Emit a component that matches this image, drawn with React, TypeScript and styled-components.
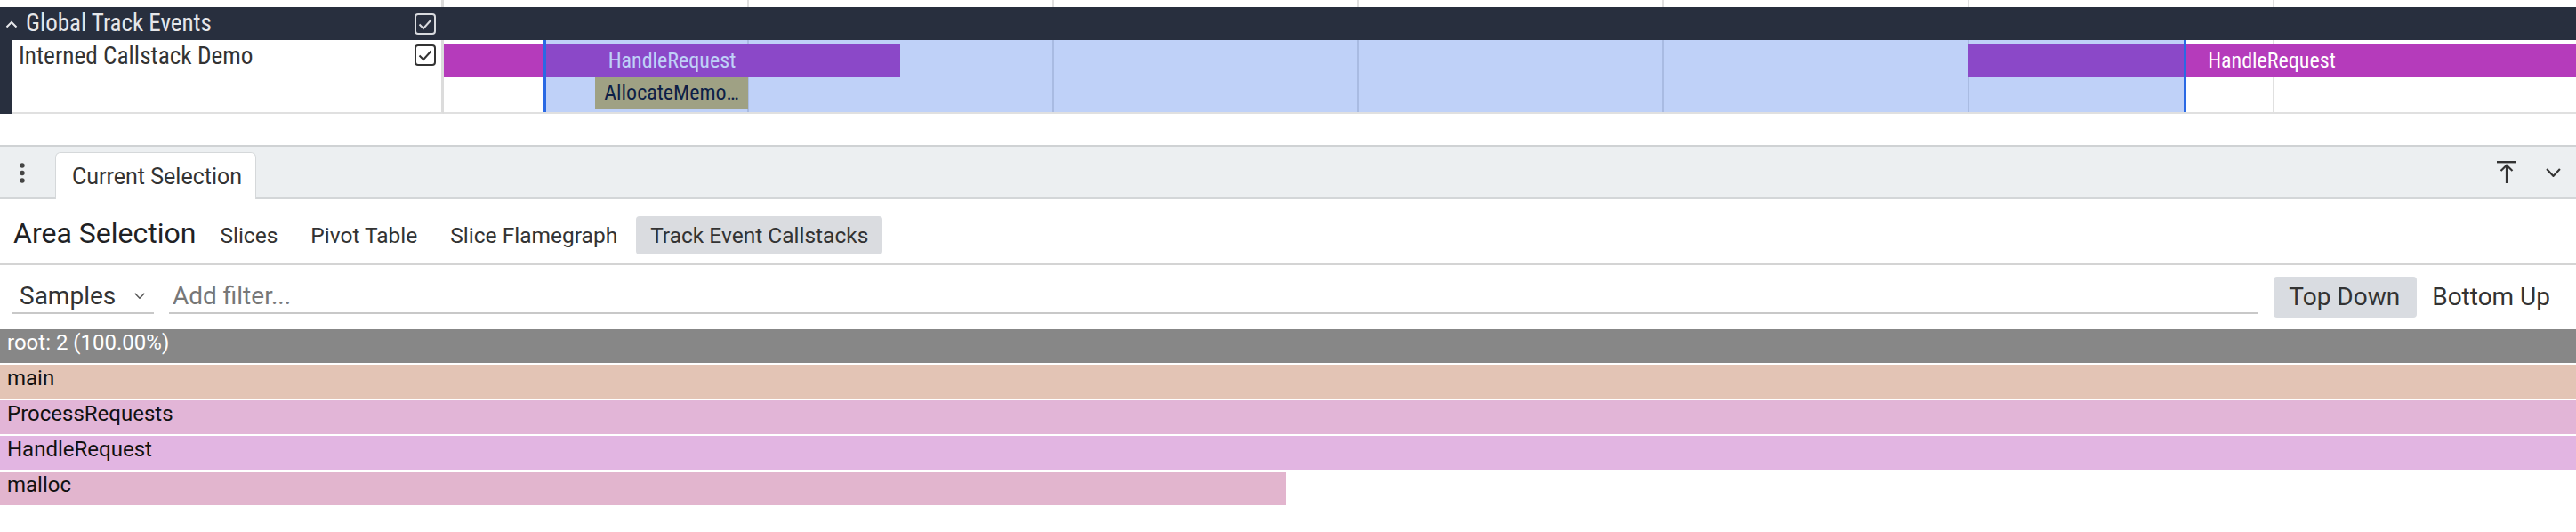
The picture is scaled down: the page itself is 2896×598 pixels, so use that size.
import React from "react";
import styled, { createGlobalStyle } from "styled-components";

const CONDENSED = `"Roboto Condensed", "Liberation Sans Narrow", Roboto, sans-serif`;

const GlobalStyle = createGlobalStyle`
  html, body { margin: 0; padding: 0; background: #ffffff; }
  body { font-family: Roboto, "Liberation Sans", sans-serif; overflow: hidden; }
  #root { width: 2896px; height: 598px; }
  * { box-sizing: border-box; }
`;

const Page = styled.div`
  width: 2896px;
  height: 598px;
  display: flex;
  flex-direction: column;
  background: #ffffff;
  overflow: hidden;
`;

/* ---------- timeline ---------- */
const Timeline = styled.div`
  display: flex;
  flex-direction: column;
`;

const TrackLine = styled.div<{ $h: number }>`
  display: flex;
  height: ${(p) => p.$h}px;
  flex: none;
`;

const BlankShell = styled.div`
  width: 499px;
  flex: none;
  border-right: 3px solid #dcdcdc;
  background: #ffffff;
`;

const Canvas = styled.div`
  flex: 1;
  position: relative;
  overflow: hidden;
`;

const TrackCanvas = styled(Canvas)`
  border-bottom: 2px solid #e0e0e0;
`;

const GridLine = styled.div<{ $x: number }>`
  position: absolute;
  top: 0;
  bottom: 0;
  left: ${(p) => p.$x}px;
  width: 2px;
  background: #e0e0e0;
`;

const GroupHeader = styled.div`
  height: 37px;
  flex: none;
  background: #282f3e;
  display: flex;
  align-items: center;
`;

const GroupShell = styled.div`
  width: 499px;
  height: 100%;
  display: flex;
  align-items: center;
  padding: 0 9px 0 6px;
`;

const GroupTitle = styled.span`
  margin-left: 9px;
  font-family: ${CONDENSED};
  font-size: 27px;
  font-weight: 400;
  line-height: 37px;
  color: #e6e7ea;
  white-space: nowrap;
`;

const Spacer = styled.span`
  flex: 1;
`;

const Indent = styled.div`
  width: 14px;
  flex: none;
  background: #282f3e;
`;

const TrackShell = styled.div`
  width: 485px;
  flex: none;
  display: flex;
  align-items: flex-start;
  padding: 3px 6px 0 7px;
  background: #ffffff;
  border-right: 3px solid #dcdcdc;
  border-bottom: 2px solid #e0e0e0;
`;

const TrackTitle = styled.span`
  font-family: ${CONDENSED};
  font-size: 27.3px;
  line-height: 30px;
  color: #333333;
  white-space: nowrap;
`;

const CheckWrap = styled.span<{ $top: number }>`
  display: flex;
  margin-top: ${(p) => p.$top}px;
`;

const Slice = styled.div<{ $x: number; $w: number; $y: number; $bg: string; $fg: string }>`
  position: absolute;
  left: ${(p) => p.$x}px;
  width: ${(p) => p.$w}px;
  top: ${(p) => p.$y}px;
  height: 36px;
  background: ${(p) => p.$bg};
  color: ${(p) => p.$fg};
  font-family: ${CONDENSED};
  font-size: 24px;
  line-height: 36px;
  text-align: center;
  white-space: nowrap;
  overflow: hidden;
  padding: 0 4px;
`;

const SelectionOverlay = styled.div<{ $x: number; $w: number }>`
  position: absolute;
  left: ${(p) => p.$x}px;
  width: ${(p) => p.$w}px;
  top: 0;
  bottom: -2px;
  background: rgba(44, 104, 232, 0.3);
  border-left: 3px solid #2a69e4;
  border-right: 3px solid #2a69e4;
`;

const Gap = styled.div`
  height: 35px;
  flex: none;
`;

/* ---------- details panel ---------- */
const TabBar = styled.div`
  height: 61px;
  flex: none;
  display: flex;
  align-items: flex-end;
  background: #eceff1;
  border-top: 2px solid #cfd2d4;
  border-bottom: 2px solid #d3d6d8;
`;

const KebabButton = styled.div`
  width: 50px;
  align-self: center;
  display: flex;
  justify-content: center;
  padding-top: 3px;
`;

const Tab = styled.div`
  margin-left: 12px;
  margin-bottom: -2px;
  width: 226px;
  height: 53px;
  padding: 12px 20px 0 18px;
  background: #ffffff;
  border: 1px solid #d5d8da;
  border-bottom: none;
  border-radius: 6px 6px 0 0;
  font-size: 25px;
  line-height: 30px;
  color: #333333;
  white-space: nowrap;
  text-align: center;
`;

const TabBarSpacer = styled.div`
  flex: 1;
`;

const IconButton = styled.div<{ $w: number; $ml?: number }>`
  width: ${(p) => p.$w}px;
  margin-left: ${(p) => p.$ml ?? 0}px;
  align-self: center;
  display: flex;
  justify-content: center;
  align-items: center;
`;

const AreaHeader = styled.div`
  height: 74px;
  flex: none;
  display: flex;
  align-items: center;
  padding-left: 15px;
  border-bottom: 2px solid #d4d4d4;
`;

const AreaTitle = styled.span`
  font-size: 32px;
  color: #202124;
  margin: 3px 11px 0 0;
  white-space: nowrap;
`;

const ModeTab = styled.span<{ $active?: boolean }>`
  height: 43px;
  line-height: 43px;
  padding: 0 16px;
  margin: 9px 5px 0 0;
  border-radius: 4px;
  font-size: 24.5px;
  color: #333333;
  white-space: nowrap;
  background: ${(p) => (p.$active ? "#dadce0" : "transparent")};
`;

const Toolbar = styled.div`
  height: 72px;
  flex: none;
  display: flex;
  align-items: flex-start;
  padding: 13px 10px 0 14px;
`;

const SelectBox = styled.div`
  width: 159px;
  height: 42px;
  display: flex;
  align-items: center;
  padding: 2px 0 0 8px;
  border-bottom: 2px solid #c8c8c8;
  font-size: 28px;
  color: #333333;
`;

const SelectLabel = styled.span`
  flex: 1;
`;

const SelectChevron = styled.span`
  display: flex;
  margin-right: 10px;
`;

const FilterInput = styled.input`
  flex: 1;
  height: 42px;
  margin: 0 0 0 17px;
  padding: 2px 0 0 4px;
  border: none;
  border-bottom: 2px solid #c8c8c8;
  border-radius: 0;
  outline: none;
  background: transparent;
  font-family: Roboto, sans-serif;
  font-size: 28px;
  color: #333333;
  &::placeholder {
    color: #777777;
  }
`;

const ToggleGroup = styled.div`
  display: flex;
  margin-left: 17px;
`;

const ToggleButton = styled.span<{ $active?: boolean }>`
  height: 46px;
  line-height: 46px;
  padding: 0 19px 0 17px;
  border-radius: 4px;
  font-size: 28px;
  color: #333333;
  white-space: nowrap;
  background: ${(p) => (p.$active ? "#d9dce1" : "transparent")};
`;

const Flamegraph = styled.div`
  display: flex;
  flex-direction: column;
`;

const FlameRow = styled.div<{ $bg: string; $fg: string }>`
  height: 38px;
  margin-bottom: 2px;
  padding-left: 8px;
  background: ${(p) => p.$bg};
  color: ${(p) => p.$fg};
  font-size: 24px;
  line-height: 30px;
  white-space: nowrap;
  overflow: hidden;
`;

/* ---------- icons ---------- */
const CheckBoxIcon: React.FC<{ color: string }> = ({ color }) => (
  <svg width="24" height="24" viewBox="0 0 24 24">
    <rect x="1" y="1" width="22" height="22" rx="3" fill="none" stroke={color} strokeWidth="2" />
    <polyline points="5.5,12.5 10,17 18.5,7.5" fill="none" stroke={color} strokeWidth="2" />
  </svg>
);

const CaretUp = () => (
  <svg width="14" height="10" viewBox="0 0 14 10">
    <polyline points="1.5,8.5 7,3 12.5,8.5" fill="none" stroke="#e6e7ea" strokeWidth="2" />
  </svg>
);

const Kebab = () => (
  <svg width="8" height="24" viewBox="0 0 8 24">
    <circle cx="4" cy="3" r="2.7" fill="#444" />
    <circle cx="4" cy="11.5" r="2.7" fill="#444" />
    <circle cx="4" cy="20" r="2.7" fill="#444" />
  </svg>
);

const AlignTopIcon = () => (
  <svg width="22" height="26" viewBox="0 0 22 26">
    <rect x="0" y="0" width="22" height="2.4" fill="#333" />
    <line x1="11" y1="6" x2="11" y2="25" stroke="#333" strokeWidth="2.2" />
    <polyline points="4.5,11 11,4.8 17.5,11" fill="none" stroke="#333" strokeWidth="2.2" />
  </svg>
);

const ChevronDown: React.FC<{ w: number; h: number; color: string; sw: number }> = ({ w, h, color, sw }) => (
  <svg width={w} height={h} viewBox={`0 0 ${w} ${h}`}>
    <polyline
      points={`${sw / 2},${sw / 2} ${w / 2},${h - sw / 2} ${w - sw / 2},${sw / 2}`}
      fill="none"
      stroke={color}
      strokeWidth={sw}
    />
  </svg>
);

const GRID = [341, 684, 1027, 1370, 1713, 2056];

const flameRows = [
  { name: "root: 2 (100.00%)", bg: "#878787", fg: "#ffffff", full: true },
  { name: "main", bg: "#e3c4b5", fg: "#111111", full: true },
  { name: "ProcessRequests", bg: "#e2b5d7", fg: "#111111", full: true },
  { name: "HandleRequest", bg: "#e2b5e2", fg: "#111111", full: true },
  { name: "malloc", bg: "#e2b5ce", fg: "#111111", full: false },
];

export default function App() {
  return (
    <>
      <GlobalStyle />
      <Page>
        <Timeline>
          <TrackLine $h={8}>
            <BlankShell />
            <Canvas>
              {GRID.map((x) => (
                <GridLine key={x} $x={x} />
              ))}
            </Canvas>
          </TrackLine>

          <GroupHeader>
            <GroupShell>
              <CaretUp />
              <GroupTitle>Global Track Events</GroupTitle>
              <Spacer />
              <CheckBoxIcon color="#d8dade" />
            </GroupShell>
          </GroupHeader>

          <TrackLine $h={83}>
            <Indent />
            <TrackShell>
              <TrackTitle>Interned Callstack Demo</TrackTitle>
              <Spacer />
              <CheckWrap $top={2}>
                <CheckBoxIcon color="#333333" />
              </CheckWrap>
            </TrackShell>
            <TrackCanvas>
              {GRID.map((x) => (
                <GridLine key={x} $x={x} />
              ))}
              <Slice $x={0} $w={513} $y={5} $bg="#b53bbb" $fg="#ffffff">
                HandleRequest
              </Slice>
              <Slice $x={170} $w={172} $y={41} $bg="#d2bb59" $fg="#000000">
                AllocateMemo…
              </Slice>
              <Slice $x={1713} $w={684} $y={5} $bg="#b53bbb" $fg="#ffffff">
                HandleRequest
              </Slice>
              <SelectionOverlay $x={112} $w={1847} />
            </TrackCanvas>
          </TrackLine>
        </Timeline>

        <Gap />

        <TabBar>
          <KebabButton>
            <Kebab />
          </KebabButton>
          <Tab>Current Selection</Tab>
          <TabBarSpacer />
          <IconButton $w={22}>
            <AlignTopIcon />
          </IconButton>
          <IconButton $w={52} $ml={15}>
            <ChevronDown w={17} h={10} color="#333" sw={2.2} />
          </IconButton>
        </TabBar>

        <AreaHeader>
          <AreaTitle>Area Selection</AreaTitle>
          <ModeTab>Slices</ModeTab>
          <ModeTab>Pivot Table</ModeTab>
          <ModeTab>Slice Flamegraph</ModeTab>
          <ModeTab $active>Track Event Callstacks</ModeTab>
        </AreaHeader>

        <Toolbar>
          <SelectBox>
            <SelectLabel>Samples</SelectLabel>
            <SelectChevron>
              <ChevronDown w={12} h={7} color="#555" sw={1.4} />
            </SelectChevron>
          </SelectBox>
          <FilterInput placeholder="Add filter..." />
          <ToggleGroup>
            <ToggleButton $active>Top Down</ToggleButton>
            <ToggleButton>Bottom Up</ToggleButton>
          </ToggleGroup>
        </Toolbar>

        <Flamegraph>
          {flameRows.map((r) => (
            <FlameRow
              key={r.name}
              $bg={r.bg}
              $fg={r.fg}
              style={{ width: r.full ? "100%" : 1446 }}
            >
              {r.name}
            </FlameRow>
          ))}
        </Flamegraph>
      </Page>
    </>
  );
}
